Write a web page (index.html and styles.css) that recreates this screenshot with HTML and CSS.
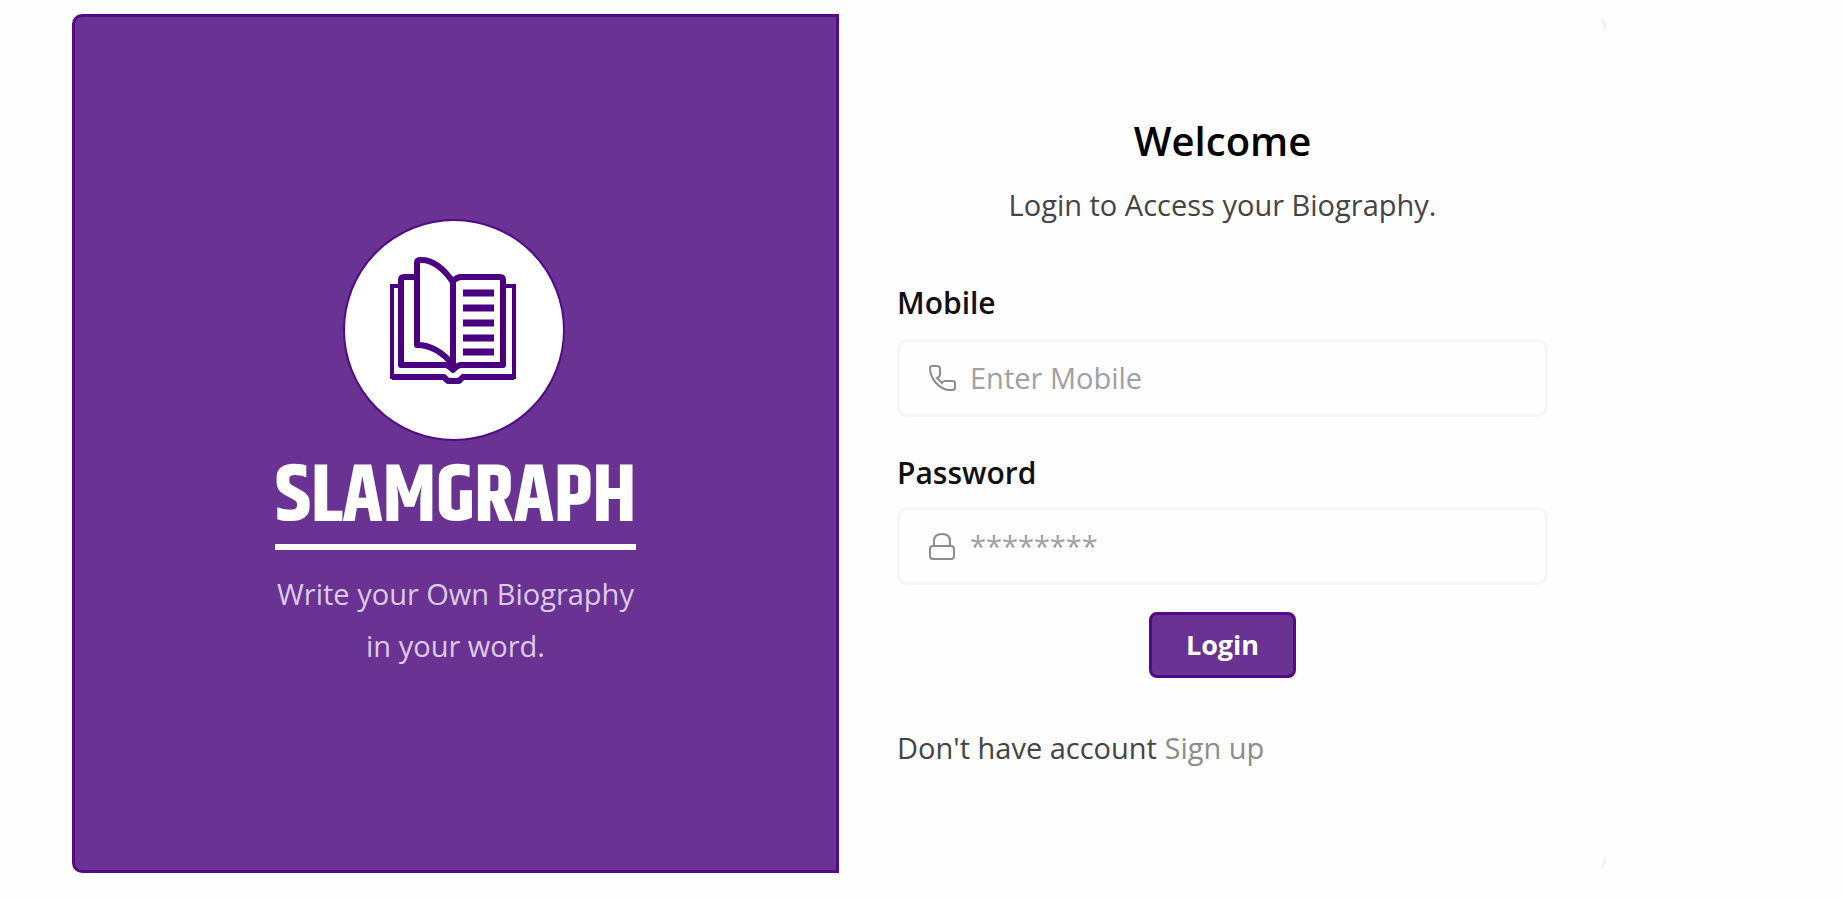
FILE: index.html
```html
<!DOCTYPE html>
<html lang="en">
<head>
<meta charset="utf-8">
<title>Slamgraph - Login</title>
<link rel="stylesheet" href="styles.css">
</head>
<body>
<main class="card">
  <section class="brand">
    <svg class="logo" viewBox="0 0 224 224" aria-hidden="true">
      <circle cx="110" cy="112" r="110" fill="#fff" stroke="#530a87" stroke-width="2"/>
      <g fill="none" stroke="#4b0082" stroke-width="5" stroke-linejoin="round" transform="translate(-2 2)">
        <path d="M57 66H50V157H101Q104 162 111 162Q118 162 121 157H172V66H164" stroke-width="4" stroke-linejoin="miter"/>
        <path d="M50 157H102L106 161H117L121 157H172" stroke-width="6"/>
        <path d="M75 57H62Q59 57 59 60V145H103Q106 145 111 150Q116 145 119 145H161V60Q161 57 158 57H119Q115 57 111 61" stroke-width="6"/>
        <path d="M111 149V62Q95 39 78 40Q75 40 75 43V125Q95 125 111 145" stroke-width="6"/>
        <path d="M121 73H152M121 88H152M121 103H152M121 118H152M121 132H152" stroke-width="7"/>
      </g>
    </svg>
    <h1 class="brand-name">SLAMGRAPH</h1>
    <p class="tagline">Write your Own Biography<br>in your word.</p>
  </section>
  <form class="login">
    <h2 class="title">Welcome</h2>
    <p class="subtitle">Login to Access your Biography.</p>
    <label class="label" for="mobile">Mobile</label>
    <div class="field">
      <svg class="icon" viewBox="0 0 28 28" aria-hidden="true"><path d="M4 2H9Q12 2 12 5V10Q12 13 9 14L14 19Q15 17 17 17H24Q27 17 27 19V24Q27 26 24 26H20Q14 25 8 19Q2 12 2 4Q2 2 4 2Z"/></svg>
      <input class="input" id="mobile" type="tel" placeholder="Enter Mobile">
    </div>
    <label class="label" for="password">Password</label>
    <div class="field">
      <svg class="icon" viewBox="0 0 28 28" aria-hidden="true"><rect x="2" y="14" width="24" height="13" rx="3"/><path d="M6 14V9Q6 2 14 2Q22 2 22 9V14"/></svg>
      <input class="input" id="password" type="password" placeholder="********">
    </div>
    <button class="submit" type="submit">Login</button>
    <p class="footer">Don't have account <a class="link" href="#">Sign up</a></p>
  </form>
</main>
</body>
</html>
```
FILE: styles.css
```css
* { box-sizing: border-box; }
body {
  margin: 0;
  padding: 14px 237px 28px 72px;
  background: #fefefe;
  font-family: "Open Sans", "Noto Sans", sans-serif;
  font-size: 29px;
  line-height: 40px;
  color: #444;
}
h1, h2, p { margin: 0; }
.card {
  display: grid;
  grid-template-columns: 1fr 1fr;
  min-height: 859px;
}
.brand {
  display: flex;
  flex-direction: column;
  align-items: center;
  padding: 201px 24px 24px;
  background: #6a3292;
  border: 3px solid #530a87;
  border-radius: 10px 0 0 10px;
}
.logo { width: 224px; height: 224px; overflow: visible; }
.brand-name {
  border-bottom: 6px solid #fff;
  margin-top: 16px;
  padding-bottom: 6px;
  color: #fff;
  font-family: "Khand", "Open Sans Condensed", "Roboto Condensed", "Liberation Sans Narrow", "Open Sans", sans-serif;
  font-size: 82px;
  font-weight: 700;
  line-height: 80px;
}
.tagline {
  margin-top: 18px;
  color: #dccbe8;
  line-height: 52px;
  text-align: center;
}
.login {
  position: relative;
  display: flex;
  flex-direction: column;
  padding: 99px 58px 24px;
}
.login::before,
.login::after {
  content: "";
  position: absolute;
  right: 0;
  width: 14px;
  height: 14px;
  border-right: 2px solid #ededf2;
}
.login::before { top: 0; border-top: 2px solid #fefefe; border-radius: 0 14px 0 0; }
.login::after { bottom: 0; border-bottom: 2px solid #fefefe; border-radius: 0 0 14px 0; }
.title {
  color: #000;
  font-size: 40px;
  font-weight: 600;
  line-height: 56px;
  text-align: center;
}
.subtitle { margin-top: 16px; text-align: center; }
.label { margin-top: 58px; color: #111; font-size: 30px; font-weight: 600; }
.field + .label { margin-top: 36px; }
.field {
  display: flex;
  align-items: center;
  gap: 14px;
  height: 78px;
  margin-top: 16px;
  padding: 0 28px;
  border: 3px solid #f5f6f8;
  border-radius: 10px;
}
.field + .label + .field { margin-top: 14px; }
.icon { flex: none; width: 28px; height: 28px; fill: none; stroke: #8c8c92; stroke-width: 2; }
.input {
  flex: 1;
  min-width: 0;
  padding: 0;
  border: 0;
  outline: 0;
  background: none;
  font: inherit;
  color: #444;
}
.input::placeholder { color: #a0a0a6; opacity: 1; }
.submit {
  align-self: center;
  margin-top: 27px;
  padding: 10px 34px;
  border: 3px solid #530a87;
  border-radius: 8px;
  background: #6a3292;
  color: #fff;
  font: inherit;
  font-size: 27px;
  font-weight: 700;
}
.footer { margin-top: 50px; }
.link { color: #8c8c8c; text-decoration: none; }
```
